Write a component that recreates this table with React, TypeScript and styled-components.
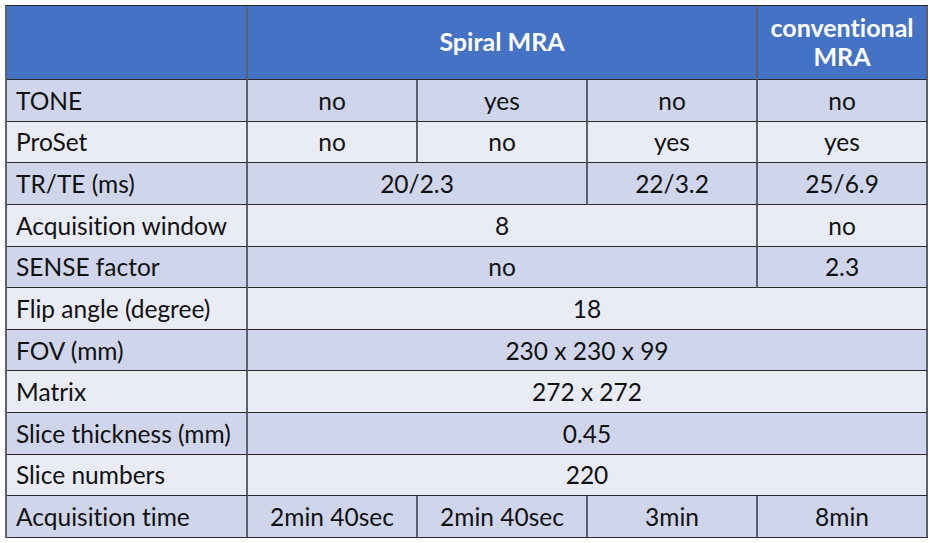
import React from 'react';
import styled, { createGlobalStyle } from 'styled-components';

const GlobalStyle = createGlobalStyle`
  html, body {
    margin: 0;
    padding: 0;
    background: #ffffff;
  }
  body {
    font-family: Lato, 'Liberation Sans', sans-serif;
    font-variant-ligatures: none;
  }
`;

const Page = styled.div`
  box-sizing: border-box;
  width: 930px;
  height: 543px;
  padding: 5px;
  background: #ffffff;
`;

const Grid = styled.div`
  display: grid;
  grid-template-columns: 241px repeat(4, 170px);
  grid-template-rows: 74px repeat(11, 41.64px);
  border-left: 2px solid #5d6070;
  border-top: 1px solid #2a2a2a;
  width: max-content;
`;

const Cell = styled.div<{ $span?: number; $shade: 'head' | 'dark' | 'light' }>`
  box-sizing: border-box;
  grid-column: span ${(p) => p.$span ?? 1};
  display: flex;
  align-items: center;
  justify-content: center;
  border-right: 2px solid #5d6070;
  border-bottom: 1px solid #2a2a2a;
  background: ${(p) => (p.$shade === 'head' ? '#4472c4' : p.$shade === 'dark' ? '#cfd5ea' : '#e9ebf5')};
  color: #111111;
  font-size: 24.5px;
  line-height: 29px;
  text-align: center;
  white-space: nowrap;
`;

const HeadCell = styled(Cell)`
  color: #ffffff;
  font-weight: bold;
  font-size: 25px;
  line-height: 29px;
  padding-bottom: 2px;
`;

const LabelCell = styled(Cell)`
  justify-content: flex-start;
  padding-left: 9px;
  text-align: left;
`;

type Row = { label: string; values: [string, number][] };

const rows: Row[] = [
  { label: 'TONE', values: [['no', 1], ['yes', 1], ['no', 1], ['no', 1]] },
  { label: 'ProSet', values: [['no', 1], ['no', 1], ['yes', 1], ['yes', 1]] },
  { label: 'TR/TE (ms)', values: [['20/2.3', 2], ['22/3.2', 1], ['25/6.9', 1]] },
  { label: 'Acquisition window', values: [['8', 3], ['no', 1]] },
  { label: 'SENSE factor', values: [['no', 3], ['2.3', 1]] },
  { label: 'Flip angle (degree)', values: [['18', 4]] },
  { label: 'FOV (mm)', values: [['230 x 230 x 99', 4]] },
  { label: 'Matrix', values: [['272 x 272', 4]] },
  { label: 'Slice thickness (mm)', values: [['0.45', 4]] },
  { label: 'Slice numbers', values: [['220', 4]] },
  { label: 'Acquisition time', values: [['2min 40sec', 1], ['2min 40sec', 1], ['3min', 1], ['8min', 1]] },
];

export default function App() {
  return (
    <Page>
      <GlobalStyle />
      <Grid>
        <HeadCell $shade='head' />
        <HeadCell $shade='head' $span={3}>
          Spiral MRA
        </HeadCell>
        <HeadCell $shade='head'>
          conventional
          <br />
          MRA
        </HeadCell>
        {rows.map((row, i) => {
          const shade = i % 2 === 0 ? 'dark' : 'light';
          return (
            <React.Fragment key={row.label}>
              <LabelCell $shade={shade}>{row.label}</LabelCell>
              {row.values.map(([text, span], j) => (
                <Cell key={j} $shade={shade} $span={span}>
                  {text}
                </Cell>
              ))}
            </React.Fragment>
          );
        })}
      </Grid>
    </Page>
  );
}
